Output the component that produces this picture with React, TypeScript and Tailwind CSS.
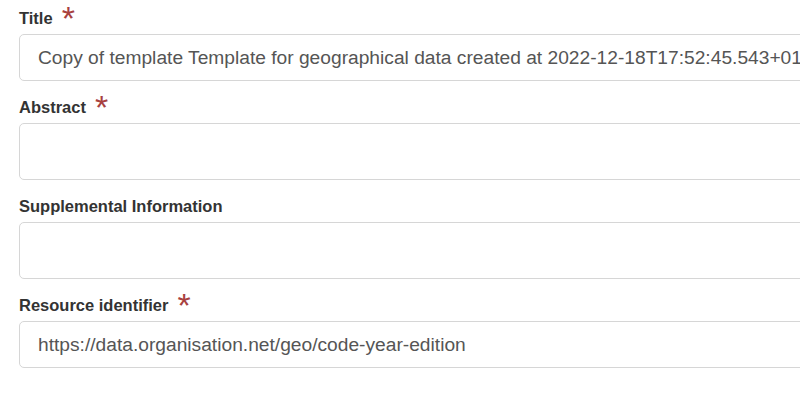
import React from 'react';

interface FieldProps {
  label: string;
  required?: boolean;
  value?: string;
  multiline?: boolean;
}

function Field({ label, required, value, multiline }: FieldProps) {
  return (
    <div className="mb-[16px]">
      <div className="flex items-start h-[20px] mb-[6px]">
        <span className="text-[16.5px] leading-[20px] font-bold text-[#333]">{label}</span>
        {required && (
          <span className="ml-[9px] -mt-[7px] text-[34px] leading-[34px] text-[#a8413f]">*</span>
        )}
      </div>
      <div
        className={
          'w-[800px] border border-[#d6d6d6] rounded-[5px] bg-white pl-[18px] whitespace-nowrap overflow-hidden text-[19.2px] text-[#555] ' +
          (multiline ? 'h-[57px]' : 'h-[47px] flex items-center pt-[1px]')
        }
      >
        {value}
      </div>
    </div>
  );
}

export default function App() {
  return (
    <div
      className="w-[800px] h-[399px] overflow-hidden bg-white pl-[19px] pt-[8px]"
      style={{ fontFamily: '"Liberation Sans", Arial, sans-serif' }}
    >
      <Field
        label="Title"
        required
        value="Copy of template Template for geographical data created at 2022-12-18T17:52:45.543+01:00"
      />
      <Field label="Abstract" required multiline />
      <Field label="Supplemental Information" multiline />
      <Field label="Resource identifier" required value="https://data.organisation.net/geo/code-year-edition" />
    </div>
  );
}
